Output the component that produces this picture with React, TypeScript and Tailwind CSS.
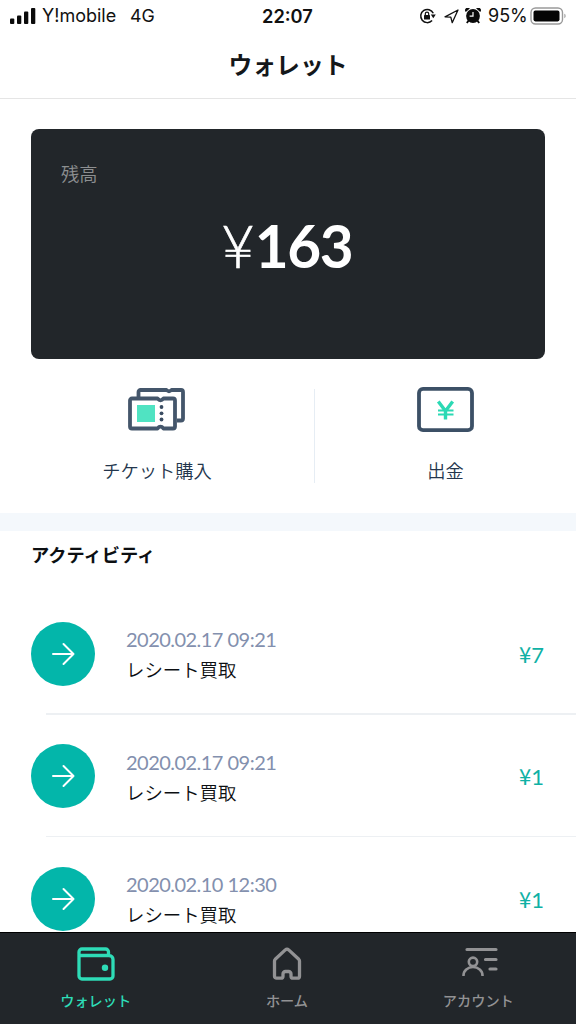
import type { ReactNode } from 'react';

type Activity = {
  id: number;
  date: string;
  title: string;
  amount: string;
};

const activities: Activity[] = [
  { id: 1, date: '2020.02.17 09:21', title: 'レシート買取', amount: '7' },
  { id: 2, date: '2020.02.17 09:21', title: 'レシート買取', amount: '1' },
  { id: 3, date: '2020.02.10 12:30', title: 'レシート買取', amount: '1' },
];

const StatusBar = () => (
  <div className="flex h-8 shrink-0 items-center font-['Inter',sans-serif] text-[18px] leading-8 text-[#111]">
    <div className="flex w-[262px] items-center pl-[10px]">
      <svg width="26" height="16" viewBox="0 0 26 16" fill="#0b0b0b">
        <rect x="0" y="10.5" width="4.3" height="5.5" rx="1" />
        <rect x="7" y="7.5" width="4.3" height="8.5" rx="1" />
        <rect x="14" y="3.5" width="4.3" height="12.5" rx="1" />
        <rect x="21" y="0" width="4.3" height="16" rx="1" />
      </svg>
      <span className="ml-[6px] w-[88px] whitespace-nowrap text-[18px]">Y!mobile</span>
      <span className="text-[17.8px]">4G</span>
    </div>
    <span className="w-[157px] text-[18.3px] font-semibold">22:07</span>
    <svg width="18" height="16" viewBox="0 0 18 16" fill="none" stroke="#111" strokeWidth="1.5">
      <path d="M13.1 12.6A6.6 6.6 0 1 1 14.3 5.2" />
      <path d="M11.8 6.5h5l-2.5 3.7z" fill="#111" stroke="none" />
      <rect x="5" y="7" width="6" height="4.5" rx="0.6" fill="#111" stroke="none" />
      <path d="M6.3 7.3V5.8a1.7 1.7 0 0 1 3.4 0v1.5" strokeWidth="1.2" />
    </svg>
    <svg className="ml-[7px]" width="15" height="15" viewBox="0 0 15 15" fill="none" stroke="#111" strokeWidth="1.3" strokeLinejoin="round">
      <path d="M14 1 1 7.8l5.8.3 1.4 5.6z" />
    </svg>
    <svg className="ml-[6px]" width="16" height="17" viewBox="0 0 16 17" fill="#0b0b0b">
      <circle cx="8" cy="8" r="6.9" />
      <path d="M.8 4A2.6 2.6 0 0 1 4.8.4zM15.2 4A2.6 2.6 0 0 0 11.2.4z" />
      <path d="m3.6 12.6-1.8 2.4M12.4 12.6l1.8 2.4" stroke="#0b0b0b" strokeWidth="1.8" />
      <path d="M8 4v4.2H4.6" stroke="#fff" strokeWidth="1.2" fill="none" />
    </svg>
    <span className="ml-[7px] w-[42px] whitespace-nowrap text-[18px]">95%</span>
    <svg width="37" height="18" viewBox="0 0 37 18">
      <rect x="1" y="1" width="31.5" height="16" rx="4.5" fill="none" stroke="#9a9a9a" strokeWidth="1.4" />
      <rect x="3.5" y="3.6" width="26" height="10.8" rx="1.8" fill="#050505" />
      <path d="M34.4 6.8c1.6.6 1.6 3.8 0 4.4z" fill="#9a9a9a" />
    </svg>
  </div>
);

const TicketIcon = () => (
  <svg width="58" height="44" viewBox="0 0 58 44" fill="none" stroke="#44566b" strokeWidth="3.8" strokeLinejoin="round">
    <path d="M10.5 9V4a2 2 0 0 1 2-2H38.5q2.5 2.4 5 0h9.5a2 2 0 0 1 2 2v26.5a2 2 0 0 1-2 2H49" />
    <path d="M4 10.500h25.500q3 3.600 6 0H45a2 2 0 0 1 2 2V38.500a2 2 0 0 1-2 2h-9.500q-3-3.600-6 0H4a2 2 0 0 1-2-2v-26a2 2 0 0 1 2-2z" />
    <rect x="9" y="17" width="18" height="17" fill="#50e3c2" stroke="none" />
    <g fill="#3a4c62" stroke="none">
      <circle cx="33.5" cy="19" r="1.9" />
      <circle cx="33.5" cy="25.3" r="1.9" />
      <circle cx="33.5" cy="31.5" r="1.9" />
    </g>
  </svg>
);

const YenNoteIcon = () => (
  <svg className="-mt-px" width="57" height="46" viewBox="0 0 57 46" fill="none">
    <rect x="2" y="1.9" width="53" height="41.3" rx="4" stroke="#3c5066" strokeWidth="3.8" />
    <g stroke="#2bd9b4">
      <path d="m21.3 14.5 7.2 9.500 7.200-9.500M28.500 23v9.500" strokeWidth="3.4" />
      <path d="M21 23.500h15.500M21 27.500h15.500" strokeWidth="1.9" />
    </g>
  </svg>
);

const ArrowIcon = () => (
  <svg width="24" height="24" viewBox="0 0 24 24" fill="none" stroke="#fff" strokeWidth="2" strokeLinecap="round" strokeLinejoin="round">
    <path d="M2 12h20.500M12.500 2l10 10-10 10" />
  </svg>
);

const WalletIcon = () => (
  <svg width="38" height="34" viewBox="0 0 38 34" fill="none" stroke="currentColor" strokeWidth="3.3" strokeLinejoin="round">
    <path d="M2 8.500h30a4 4 0 0 1 4 4V29a3 3 0 0 1-3 3H5a3 3 0 0 1-3-3V5a3 3 0 0 1 3-3h23.500a3 3 0 0 1 3 3v3.500" />
    <circle cx="28" cy="20.8" r="3.2" fill="currentColor" stroke="none" />
  </svg>
);

const HomeIcon = () => (
  <svg width="30" height="34" viewBox="0 0 30 34" fill="none" stroke="currentColor" strokeWidth="3.3" strokeLinejoin="round">
    <path d="M3.2 12.3 13.3 2.9q1.7-1.5 3.4 0L26.8 12.3q.7.7.7 1.7V29.2a2 2 0 0 1-2 2h-4.500a2 2 0 0 1-2-2V27a2.500 2.500 0 0 0-2.500-2.500h-3A2.500 2.500 0 0 0 11 27v2.200a2 2 0 0 1-2 2H4.500a2 2 0 0 1-2-2V14q0-1 .7-1.700z" />
  </svg>
);

const AccountIcon = () => (
  <svg className="ml-[3px]" width="36" height="30" viewBox="0 0 36 30" fill="none" stroke="currentColor" strokeWidth="3.2" strokeLinecap="round">
    <path d="M5 2.500h29M23.500 12.500H34M28 22h6" />
    <circle cx="11" cy="14.800" r="4.2" strokeWidth="2.6" />
    <path d="M1.500 29v-.7a9.500 8.300 0 0 1 19 0v.7" strokeWidth="2.6" strokeLinecap="butt" />
  </svg>
);

const Action = ({ icon, label }: { icon: ReactNode; label: string }) => (
  <button className="flex h-[95px] flex-1 flex-col items-center text-[18.3px] font-[350] leading-[26px] text-[#24364d]">
    <span className="flex h-[70px] items-start">{icon}</span>
    {label}
  </button>
);

const ActivityRow = ({ item }: { item: Activity }) => (
  <li className="flex h-[122.5px] shrink-0 flex-col">
    <div className="flex h-[121px] items-center pl-[31px] pr-8 pt-[2px]">
      <span className="flex size-16 items-center justify-center rounded-full bg-[#03b6aa]">
        <ArrowIcon />
      </span>
      <div className="ml-[31px] flex-1">
        <p className="pt-[2px] font-['Lato',sans-serif] text-[20px] leading-[30px] tracking-[-0.53px] text-[#8390ae]">{item.date}</p>
        <p className="text-[18.4px] font-[350] leading-[31px] text-[#0c0f12]">{item.title}</p>
      </div>
      <p className="flex items-baseline text-[22px] leading-8 text-[#0fb1a5]">
        <span>¥</span>
        <span className="font-['Lato',sans-serif]">{item.amount}</span>
      </p>
    </div>
    <div className="ml-[46px] h-[1.5px] bg-[#edf0f3]" />
  </li>
);

const Tab = ({ icon, label, active = false }: { icon: ReactNode; label: string; active?: boolean }) => (
  <button className={`flex flex-1 flex-col items-center pt-[14px] text-[14.2px] font-medium leading-5 ${active ? 'text-[#2edcb7]' : 'text-[#929294]'}`}>
    <span className="flex h-[43px] items-start">{icon}</span>
    {label}
  </button>
);

const App = () => {
  return (
    <div className="flex h-[1024px] w-[576px] flex-col overflow-hidden bg-white font-['Noto_Sans_CJK_JP',sans-serif]">
      <StatusBar />
      <header className="flex h-[67px] shrink-0 items-center justify-center border-b border-[#e5e5e5] pb-[2px]">
        <h1 className="text-[23.8px] font-bold leading-8 text-[#14171a]">ウォレット</h1>
      </header>

      <main className="flex min-h-0 flex-1 flex-col overflow-hidden">
        <section className="mx-[31px] mt-[30px] h-[230px] shrink-0 rounded-lg bg-[#22262a] pt-[30px]">
          <p className="pl-[30px] text-[18.3px] font-[350] leading-7 text-[#8d8f91]">残高</p>
          <p className="mt-5 flex items-baseline justify-center pr-[3px] font-['Lato',sans-serif] text-[58.5px] leading-[76px] text-white">
            <span className="font-light [-webkit-text-stroke:0.6px_white]">¥</span>
            <span className="font-bold tracking-[-1.5px]">163</span>
          </p>
        </section>

        <section className="flex h-[154px] shrink-0 pt-[29px]">
          <div className="flex w-[314px]">
            <Action icon={<TicketIcon />} label="チケット購入" />
          </div>
          <div className="mt-px h-[94px] w-px bg-[#e6edf4]" />
          <Action icon={<YenNoteIcon />} label="出金" />
        </section>

        <div className="h-[18px] shrink-0 bg-[#f4f8fc]" />

        <section className="shrink-0">
          <h2 className="h-[61px] pl-[31px] pt-[9px] text-[18.2px] font-bold leading-7 text-[#0c0f12]">アクティビティ</h2>
          <ul>
            {activities.map((item) => (
              <ActivityRow key={item.id} item={item} />
            ))}
          </ul>
        </section>
      </main>

      <nav className="flex h-[92px] shrink-0 border-t border-black bg-[#22262a] pr-[2px]">
        <Tab icon={<WalletIcon />} label="ウォレット" active />
        <Tab icon={<HomeIcon />} label="ホーム" />
        <Tab icon={<AccountIcon />} label="アカウント" />
      </nav>
    </div>
  );
};

export default App;
